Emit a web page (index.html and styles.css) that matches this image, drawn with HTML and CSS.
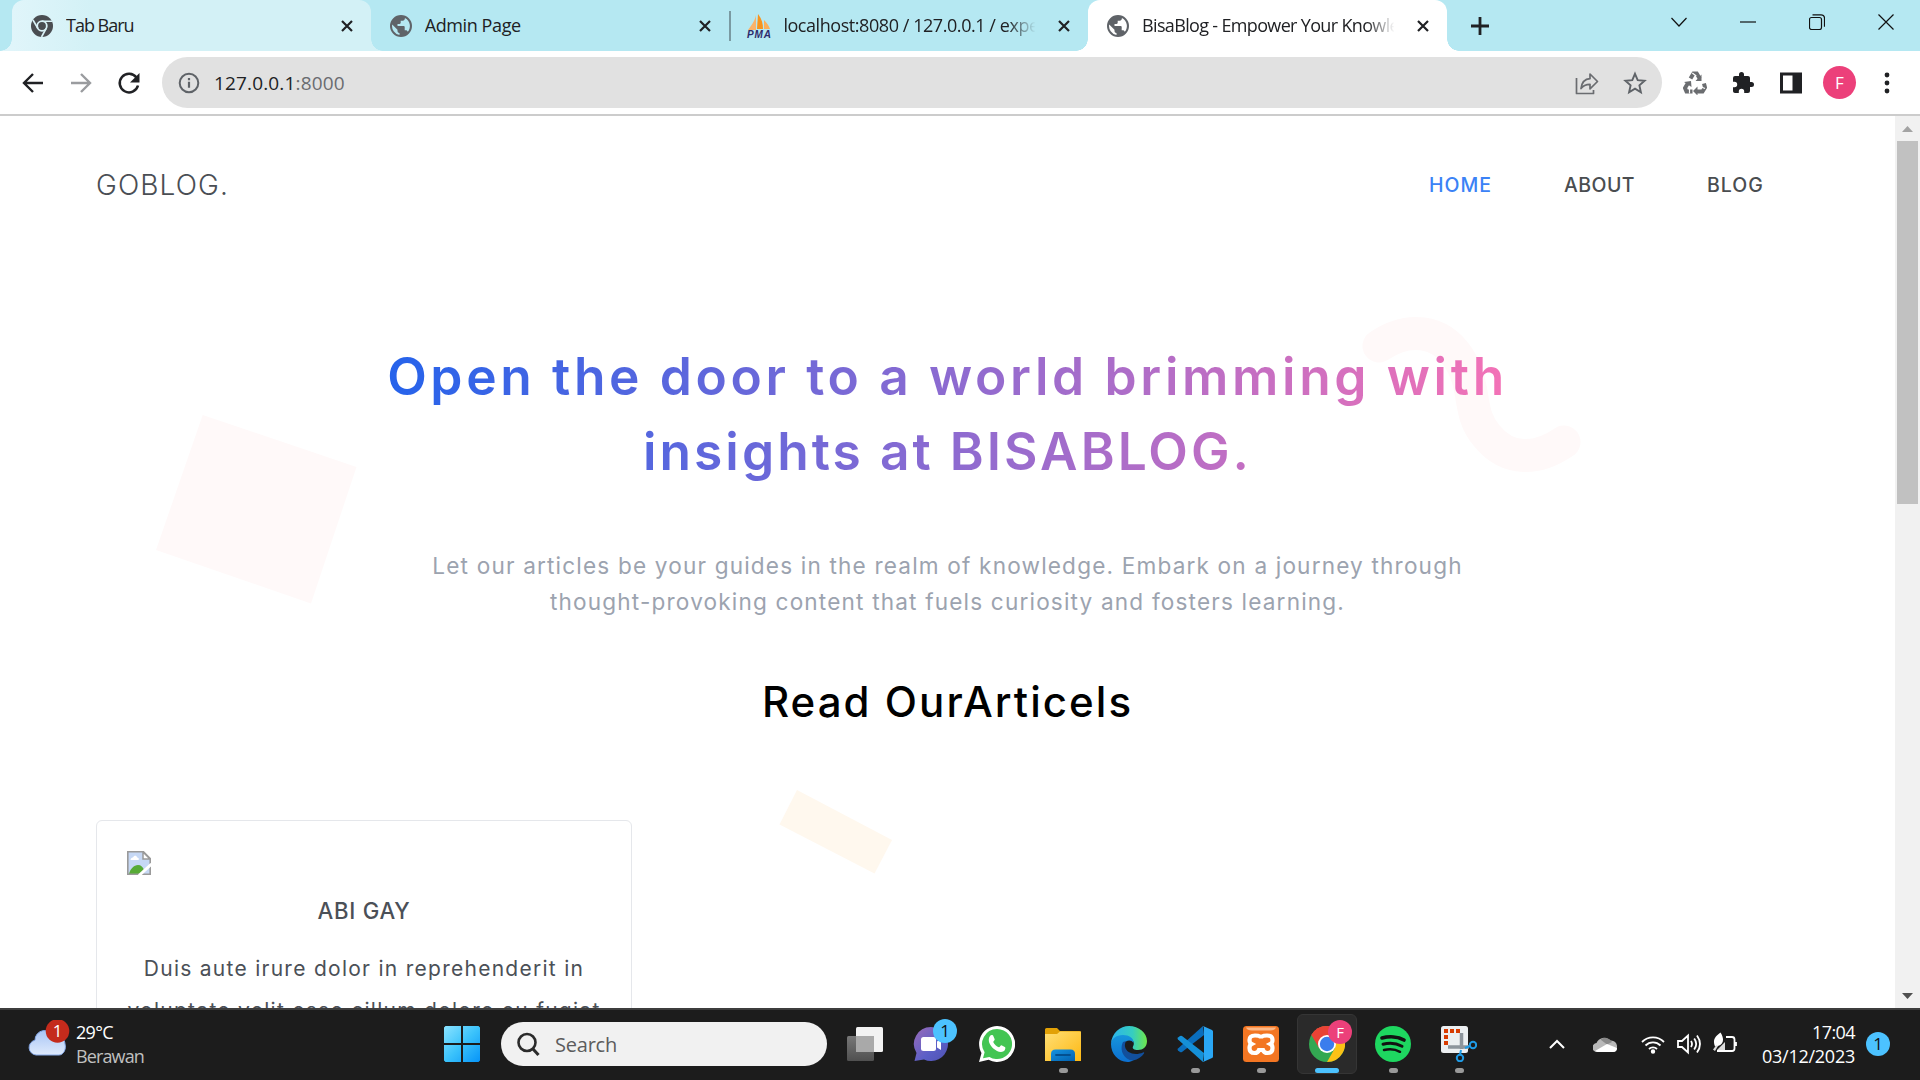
FILE: index.html
```html
<!DOCTYPE html>
<html lang="id">
<head>
<meta charset="utf-8">
<title>BisaBlog - Empower Your Knowledge</title>
<link rel="stylesheet" href="styles.css">
</head>
<body>
<svg class="defs" width="0" height="0">
  <symbol id="globe" viewBox="0 0 24 24"><path fill="#5f6368" fill-rule="evenodd" d="M12 1a11 11 0 1 0 0 22A11 11 0 0 0 12 1zM3.2 10.5l5.3 5.2v1.2c0 1.200.8 2 2 2v2A9 9 0 0 1 3.200 10.500zM18.800 17.800c-.3-.9-1.100-1.500-2.100-1.500h-1v-3.200c0-.6-.5-1.100-1.100-1.100H8.500V9.900h2.100c.6 0 1.100-.5 1.100-1.100V6.700h2.100c1.200 0 2.100-1 2.100-2.100V4a9 9 0 0 1 2.900 13.800z"/></symbol>
  <symbol id="x" viewBox="0 0 12 12"><path d="M1 1l10 10M11 1L1 11" stroke="#202124" stroke-width="2.200" fill="none"/></symbol>
</svg>
<div class="tabs">
  <div class="tab tab-hover">
    <svg class="fav" viewBox="0 0 24 24"><circle cx="12" cy="12" r="11" fill="#4a4d51"/><circle cx="12" cy="12" r="4.800" fill="#4a4d51" stroke="#d9f2f7" stroke-width="1.800"/><path d="M12 7.200h10M7.900 14.500L3 6M16.100 14.500L11.500 23" stroke="#d9f2f7" stroke-width="1.600"/></svg>
    <span class="tab-title title-new">Tab Baru</span><svg class="close"><use href="#x"/></svg>
  </div>
  <div class="tab">
    <svg class="fav"><use href="#globe"/></svg>
    <span class="tab-title title-admin">Admin Page</span><svg class="close"><use href="#x"/></svg>
  </div>
  <div class="tab tab-sep">
    <svg class="fav" viewBox="0 0 24 24"><path d="M9 1v15H1C4 12 8 7 9 1z" fill="#f9b36b"/><path d="M11 0c4 5 5 10 5 15h-6z" fill="#f7941d"/><path d="M17 6c3 3 5 6 6 9h-6z" fill="#fbb05b"/><text x="0" y="24" class="pma" textLength="24">PMA</text></svg>
    <span class="tab-title faded title-pma">localhost:8080 / 127.0.0.1 / experi</span><svg class="close"><use href="#x"/></svg>
  </div>
  <div class="tab tab-active">
    <svg class="fav"><use href="#globe"/></svg>
    <span class="tab-title faded title-blog">BisaBlog - Empower Your Knowle</span><svg class="close"><use href="#x"/></svg>
  </div>
  <svg class="plus" viewBox="0 0 18 18"><path d="M9 0v18M0 9h18" stroke="#202124" stroke-width="2.800"/></svg>
  <div class="win">
    <svg viewBox="0 0 16 16"><path d="M.5 4l7.500 8 7.500-8"/></svg>
    <svg viewBox="0 0 16 16"><path d="M0 8h16"/></svg>
    <svg viewBox="0 0 16 16"><rect x=".5" y="3.500" width="12" height="12" rx="2"/><path d="M3.500.8h8.500c2 0 3.500 1.500 3.500 3.500v8.500"/></svg>
    <svg viewBox="0 0 16 16"><path d="M.5.5l15 15M15.500.5l-15 15"/></svg>
  </div>
</div>
<div class="toolbar">
  <svg class="tool" viewBox="0 0 24 24"><path d="M22 12H3M12 3l-9 9 9 9" fill="none" stroke="#202124" stroke-width="2.400"/></svg>
  <svg class="tool" viewBox="0 0 24 24"><path d="M2 12h19M12 3l9 9-9 9" fill="none" stroke="#9a9c9f" stroke-width="2.400"/></svg>
  <svg class="tool" viewBox="0 0 24 24"><path d="M19.500 6.500A9.300 9.300 0 1 0 21 14.500" fill="none" stroke="#202124" stroke-width="2.500"/><path d="M22.500 2v9.500H13z" fill="#202124"/></svg>
  <div class="omnibox">
    <svg class="info" viewBox="0 0 22 22"><circle cx="11" cy="11" r="9.300" fill="none" stroke="#5f6368" stroke-width="2"/><path d="M11 9.800v6M11 6v2.200" stroke="#5f6368" stroke-width="2.200"/></svg>
    <span class="url">127.0.0.1<span class="port">:8000</span></span>
    <svg class="obi" viewBox="0 0 24 24"><path d="M1.500 7v15.500h17V19M6 17.500c.8-6 4-9.500 9-9.800V3l7.500 7.500L15 17.800v-4.500c-4 0-7 1.200-9 4.200z" fill="none" stroke="#6a6c70" stroke-width="1.700" stroke-linejoin="round"/></svg>
    <svg class="obi" viewBox="0 0 24 24"><path d="M12 2.800l2.700 6.400 6.900.6-5.200 4.600 1.500 6.800-5.900-3.600-5.900 3.600 1.500-6.800L2.400 9.800l6.900-.6z" fill="none" stroke="#5f6368" stroke-width="1.900"/></svg>
  </div>
  <svg class="tool" viewBox="0 0 24 24"><g fill="none" stroke="#6b6d70" stroke-width="4"><path d="M7.500 7.500l3-5h3.200l3 5M21 12.500l1 4-2.500 4h-6M9.500 20.500h-6L2 17l3-5"/></g><path d="M18.500 3.500v6.500h-6zM14.500 15.500v9l-4.500-4.500zM1 11l7-1 .5 6z" fill="#6b6d70"/><path d="M9.300 2l4 3M22 17.500l-5-2M6.500 22.500V17" stroke="#fff" stroke-width="1.200"/></svg>
  <svg class="tool" viewBox="0 0 24 24"><path d="M20.500 11H19V7c0-1.100-.9-2-2-2h-4V3.500a2.500 2.500 0 0 0-5 0V5H4a2 2 0 0 0-2 2v3.800h1.500a2.700 2.700 0 0 1 0 5.400H2V20c0 1.100.9 2 2 2h3.800v-1.500a2.700 2.700 0 0 1 5.400 0V22H17a2 2 0 0 0 2-2v-4h1.500a2.500 2.500 0 0 0 0-5z" fill="#202124"/></svg>
  <svg class="tool" viewBox="0 0 24 24"><path fill-rule="evenodd" d="M1 1.500h22v21H1zM4 4.500v15h9.500v-15z" fill="#202124"/></svg>
  <div class="avatar">F</div>
  <svg class="tool" viewBox="0 0 24 24"><g fill="#202124"><circle cx="12" cy="4" r="2.400"/><circle cx="12" cy="12" r="2.400"/><circle cx="12" cy="20" r="2.400"/></g></svg>
</div>
<div class="view">
  <main class="page">
    <svg class="shapes" viewBox="0 116 1895 892">
      <path d="M202.700 415L356.500 467 311 603.500 156 550z" fill="#fff9f9"/>
      <path d="M797 790l95 50-17.500 33.500-95-49z" fill="#fff8ee"/>
      <path d="M1379 346C1408 326 1440 330 1458 357C1478 387 1466 412 1487 436C1508 462 1538 460 1564 442" fill="none" stroke="#fff9f9" stroke-width="33" stroke-linecap="round"/>
    </svg>
    <header class="header">
      <div class="logo">GOBLOG.</div>
      <nav class="nav"><a class="current">HOME</a><a class="about">ABOUT</a><a class="blog">BLOG</a></nav>
    </header>
    <h1 class="hero">Open the door to a world brimming with<br><span class="hero-end">insights at BISABLOG.</span></h1>
    <p class="lead">Let our articles be your guides in the realm of knowledge. Embark on a journey through<br>thought-provoking content that fuels curiosity and fosters learning.</p>
    <h2 class="section">Read OurArticels</h2>
    <article class="card">
      <svg class="broken" viewBox="0 0 24 24"><path d="M.8.8h15.700l6.700 6.700v15.700H.8z" fill="#c6d8f5"/><path d="M2 23c1-5 5-9 9-9 3 0 5 2 6 5l-4 4z" fill="#57ab36"/><path d="M3.500 9c0-2 2-2.500 2.500-2.500C7 4 10 4.500 10 6.500c2 0 2.500 2.500 1 2.500z" fill="#fff"/><path d="M.8.8h15.700l6.700 6.700v15.700H.8z" fill="none" stroke="#9a9a9a" stroke-width="1.600"/><path d="M16 1v7h7z" fill="#fff" stroke="#9a9a9a" stroke-width="1.500"/><path d="M24.500 13L12 24.500" stroke="#fff" stroke-width="3"/></svg>
      <h3 class="card-title">ABI GAY</h3>
      <p class="card-text">Duis aute irure dolor in reprehenderit in<br>voluptate velit esse cillum dolore eu fugiat</p>
    </article>
  </main>
  <div class="scrollbar"><svg viewBox="0 0 25 25"><path d="M7 16h11l-5.500-6z" fill="#a3a3a3"/></svg><div class="thumb"></div><svg viewBox="0 0 25 25"><path d="M7 10h11l-5.500 6z" fill="#505050"/></svg></div>
</div>
<div class="taskbar">
  <div class="weather">
    <svg viewBox="0 0 42 42"><defs><linearGradient id="cl" x1="0" y1="0" x2="0" y2="1"><stop offset="0" stop-color="#a9c6f5"/><stop offset="1" stop-color="#dfeafc"/></linearGradient></defs><circle cx="26" cy="19" r="9" fill="#f7941d"/><path d="M8 35a7.500 7.500 0 0 1-1-14.800A9.500 9.500 0 0 1 25.500 17 8 8 0 0 1 37 24c1.500 5-1.500 11-6 11z" fill="url(#cl)" stroke="#86a9e8"/><circle cx="29.500" cy="11" r="11.800" fill="#c42b1c"/><text x="29.500" y="17" text-anchor="middle" class="badge-w">1</text></svg>
    <div class="wtext"><div class="temp">29°C</div><div class="dim">Berawan</div></div>
  </div>
  <div class="start"><svg viewBox="0 0 36 36"><defs><linearGradient id="wn" x1="0" y1="0" x2="1" y2="1"><stop offset="0" stop-color="#8be3ff"/><stop offset=".5" stop-color="#3cc3fb"/><stop offset="1" stop-color="#0694f8"/></linearGradient></defs><path d="M1.500 0H17v17H0V1.500zM19 0h15.500L36 1.500V17H19zM0 19h17v17H1.500L0 34.500zM19 19h17v15.500L34.500 36H19z" fill="url(#wn)"/></svg></div>
  <div class="search"><svg viewBox="0 0 24 24"><circle cx="11" cy="10.500" r="8.500" fill="none" stroke="#2b2b2b" stroke-width="2.600"/><path d="M17 17l5.500 6" stroke="#2b2b2b" stroke-width="3"/></svg><span>Search</span></div>
  <div class="apps">
    <div class="app"><svg viewBox="0 0 36 36"><defs><linearGradient id="tv" x1="0" y1="0" x2="0" y2="1"><stop offset="0" stop-color="#777"/><stop offset="1" stop-color="#505050"/></linearGradient></defs><rect x="9" y="1" width="27" height="25" rx="1.500" fill="#f2f2f2"/><rect x="0" y="10" width="27" height="25" rx="1.500" fill="url(#tv)"/><path d="M9 10h18v16H9z" fill="#a9a9a9"/></svg></div>
    <div class="app"><svg viewBox="0 0 36 36"><defs><linearGradient id="ch" x1="0" y1="0" x2="1" y2="1"><stop offset="0" stop-color="#9a6bb8"/><stop offset=".6" stop-color="#5b5fc7"/><stop offset="1" stop-color="#4f52b2"/></linearGradient></defs><path d="M18 1a17 17 0 1 1-7 32.500L1.500 35l2-8A17 17 0 0 1 18 1z" fill="url(#ch)"/><rect x="8" y="11" width="15" height="14" rx="2.500" fill="#fff"/><path d="M24 15.500l4-2.500v11l-4-2.500z" fill="#fff"/></svg><span class="badge">1</span></div>
    <div class="app"><svg viewBox="0 0 36 36"><path d="M18 0a18 18 0 1 1-8.500 33.800L0 36l2.500-9A18 18 0 0 1 18 0z" fill="#fff"/><path d="M18 3a15 15 0 1 1-7.600 27.900L4 32.300l1.600-6A15 15 0 0 1 18 3z" fill="#43c553"/><path d="M11 10c1-1.500 3-1 3.300 0l1.400 3.300c.2.700-1.500 2.400-1.500 2.700 1.200 2.500 3.300 4.300 5.700 5.300.8.200 1.800-2.300 2.600-2l3.300 1.600c1.200.6.200 3.500-1.200 4.300-3 1.800-7.100 0-10.300-2.700C11 19.500 8 14 11 10z" fill="#fff"/></svg></div>
    <div class="app"><svg viewBox="0 0 36 36"><defs><linearGradient id="fo" x1="0" y1="0" x2="1" y2="1"><stop offset="0" stop-color="#ffdf75"/><stop offset="1" stop-color="#fdb813"/></linearGradient><linearGradient id="fb" x1="0" y1="0" x2="1" y2="1"><stop offset="0" stop-color="#1593e0"/><stop offset="1" stop-color="#0261b0"/></linearGradient></defs><path d="M0 3.500Q0 2 1.500 2H12l3 3h19.500Q36 5 36 6.500V20H0z" fill="#e2a106"/><path d="M0 8h12l3-2.500h21V35H0z" fill="url(#fo)"/><path d="M6 35v-7q0-4.500 4.500-4.500h15Q30 23.500 30 28v7z" fill="url(#fb)"/><path d="M11 29h14" stroke="#034f8f" stroke-width="1.800" stroke-linecap="round"/></svg><i class="dot"></i></div>
    <div class="app"><svg viewBox="0 0 36 36"><defs><linearGradient id="e1"><stop offset="0" stop-color="#2bb3ee"/><stop offset=".6" stop-color="#36cdc0"/><stop offset="1" stop-color="#6ee84b"/></linearGradient><linearGradient id="e2" x1="0" y1="0" x2="0" y2="1"><stop offset="0" stop-color="#1695dc"/><stop offset="1" stop-color="#0c6fd0"/></linearGradient></defs><path d="M0 17C1 7 9 0 18 0c10 0 18 7 18 15 0 6-4 9-9 9-4 0-6-1.500-5-3.500 3-5-2-10-9-10C7 10.500 2 13 0 17z" fill="url(#e1)"/><path d="M0 18c0-5 5-9 12-9 6 0 11 3 10.500 8-2-4-8-3-10 1-3 7 2 14 10 16-2 1.500-4 2-6 2C7 35.500 0 28 0 18z" fill="url(#e2)"/><path d="M12 16c-4 8 1 18 10 18.500 5-1 9-4 11-7 .5-1-.3-1.400-1-1-8 3.500-17 .5-18-6-.3-2 .3-4 1-5.500z" fill="#124f9c"/></svg></div>
    <div class="app"><svg viewBox="0 0 36 36"><path d="M26 0L1 22.500q-1 1 0 2L3 26q1 .6 2 0L27 9z" fill="#0a6ebd"/><path d="M26 36L1 13.500q-1-1 0-2L3 10q1-.6 2 0l22 17z" fill="#1590d8"/><path d="M26 0l9 4q1 .5 1 1.500v25q0 1-1 1.500l-9 4q-.5 0 1-1.500V1.500z" fill="#2aa7f5"/></svg><i class="dot"></i></div>
    <div class="app"><svg viewBox="0 0 36 36"><rect width="36" height="36" rx="3.500" fill="#f37623"/><path d="M3 1.500h30q-1 3-6 3H9q-5 0-6-3z" fill="#fbb98a"/><path d="M12 9.500q6 0 6 3 0-3 6-3 5.500 0 5.500 4.500 0 3-2 4 2 1 2 4 0 5-5 5-3.500 0-4.500-3h-4q-1 3-4.500 3-5 0-5-5 0-3 2-4-2-1-2-4 0-4.500 5.500-4.500z" fill="none" stroke="#fff" stroke-width="4.200"/></svg><i class="dot"></i></div>
    <div class="app focus"><svg viewBox="0 0 36 36"><circle cx="18" cy="18" r="18" fill="#33a852"/><path d="M18 18L2.400 9A18 18 0 0 1 33.600 9L18 9.500z" fill="#e94335"/><path d="M18 9h15.600A18 18 0 0 1 18 36l8-14z" fill="#fbc116"/><path d="M2.400 9A18 18 0 0 1 18 0v18l-8 4z" fill="#e94335"/><circle cx="18" cy="18" r="9" fill="#fff"/><circle cx="18" cy="18" r="7.200" fill="#3b7ded"/></svg><span class="badge pink">F</span><i class="dot"></i></div>
    <div class="app"><svg viewBox="0 0 36 36"><circle cx="18" cy="18" r="18" fill="#1ed760"/><g fill="none" stroke="#121212" stroke-linecap="round"><path d="M7 12c7-2 16-1.500 22 2" stroke-width="3.600"/><path d="M8 18.200c6.500-1.800 13.500-1 19 2" stroke-width="3"/><path d="M9 24c5.500-1.300 11-1 16 1.800" stroke-width="2.500"/></g></svg><i class="dot"></i></div>
    <div class="app"><svg viewBox="0 0 36 36"><rect width="27" height="27" rx="2.500" fill="#eceff1"/><path d="M3 5h4M9 5h4M15 5h4M5 9v4M5 15v4" stroke="#d83b01" stroke-width="4"/><path d="M20.500 7v16M7 21h21" stroke="#8d959c" stroke-width="3.500"/><circle cx="32" cy="19" r="3.200" fill="none" stroke="#1f9be6" stroke-width="2"/><circle cx="19" cy="32" r="3.200" fill="none" stroke="#1f9be6" stroke-width="2"/><path d="M24 22l5-2M20 24l-1 5" stroke="#1f9be6" stroke-width="2"/></svg><i class="dot"></i></div>
  </div>
  <div class="tray">
    <svg class="chev" viewBox="0 0 16 10"><path d="M1 9l7-7 7 7"/></svg>
    <svg class="cloud" viewBox="0 0 24 16"><path d="M4.500 16A4.500 4.500 0 0 1 3.500 7 8 8 0 0 1 17 4.500 6 6 0 0 1 24 11q0 5-4 5z" fill="#b9b9b9"/><path d="M7.500 3.500A7.500 7.500 0 0 1 19 6l-5 2.500z" fill="#8a8a8a"/><path d="M2 15l12-7 10 4q0 4-4 4H4.500z" fill="#fff"/></svg>
    <svg class="ti" viewBox="0 0 24 24"><path d="M1 10a15.500 15.500 0 0 1 22 0M4.500 13.500a10.600 10.600 0 0 1 15 0M8 17a5.700 5.700 0 0 1 8 0"/><circle cx="12" cy="19.500" r="1.300" fill="#fff"/></svg>
    <svg class="ti" viewBox="0 0 24 24"><path d="M1 9h4l6-5.500v17L5 15H1zM14 9q2 3 0 6M17.200 6.500q4 5.500 0 11M20 3.500q6 8.500 0 17"/></svg>
    <svg class="ti" viewBox="0 0 24 24"><path d="M13 5h6q2.500 0 2.500 2.500v9Q21.500 19 19 19H4M23 10v4"/><path d="M2 14.500C-1 7 3 4 7.500.5 11 6 11.500 12 5 14z" fill="#fff" stroke="none"/><path d="M4 18l8-8v8zM0 17.500L3.500 13l1.500 1-3 5z" fill="#ddd" stroke="none"/></svg>
    <div class="clock"><div class="time">17:04</div><div class="date">03/12/2023</div></div>
    <span class="notif">1</span>
  </div>
</div>
</body>
</html>
```
FILE: styles.css
```css
* { box-sizing: border-box; }
body { margin: 0; width: 1920px; height: 1080px; overflow: hidden; display: flex; flex-direction: column; background: #fff; font-family: "Open Sans", "Noto Sans", sans-serif; font-size: 18px; color: #202124; }
svg { display: block; flex: none; }
h1, h2, h3, p { margin: 0; white-space: nowrap; }
.defs { position: absolute; }

/* Tab strip */
.tabs { height: 51px; flex: none; display: flex; align-items: center; padding-left: 12px; background: #b5e8f2; }
.tab { width: 358.700px; height: 51px; flex: none; display: flex; align-items: center; padding: 0 18px; position: relative; }
.fav { width: 24px; height: 24px; margin-right: 12px; overflow: visible; }
.tab-title { width: 258px; height: 30px; line-height: 29px; overflow: hidden; white-space: nowrap; }
.title-new { letter-spacing: -1px; }
.title-admin { letter-spacing: -.4px; }
.title-pma { letter-spacing: -.44px; }
.title-blog { letter-spacing: -.66px; }
.faded { -webkit-mask-image: linear-gradient(90deg, #000 88%, transparent 99%); mask-image: linear-gradient(90deg, #000 88%, transparent 99%); }
.close { width: 12px; height: 12px; margin-left: 20px; }
.tab-hover { background: linear-gradient(90deg, #e0f5fa, #d3f1f6 80px); border-radius: 12px 12px 0 0; }
.tab-active { background: #fff; border-radius: 12px 12px 0 0; }
.tab-hover::before, .tab-hover::after, .tab-active::before, .tab-active::after { content: ""; position: absolute; bottom: 0; width: 12px; height: 12px; }
.tab-hover::before { left: -12px; background: radial-gradient(circle at 0 0, transparent 11.500px, #e0f5fa 12px); }
.tab-hover::after { right: -12px; background: radial-gradient(circle at 100% 0, transparent 11.500px, #d3f1f6 12px); }
.tab-active::before { left: -12px; background: radial-gradient(circle at 0 0, transparent 11.500px, #fff 12px); }
.tab-active::after { right: -12px; background: radial-gradient(circle at 100% 0, transparent 11.500px, #fff 12px); }
.tab-sep::before { content: ""; position: absolute; left: 0; top: 11px; width: 1.500px; height: 30px; background: #7a9aa2; }
.pma { font: italic bold 10px "Liberation Sans", sans-serif; fill: #2d2a6b; }
.plus { width: 18px; height: 18px; margin-left: 24px; }
.win { margin-left: auto; display: flex; gap: 53px; padding: 0 26px 7px 0; }
.win svg { width: 16px; height: 16px; fill: none; stroke: #111; stroke-width: 1.200; }

/* Address bar */
.toolbar { height: 65px; flex: none; display: flex; align-items: center; padding: 0 21px; border-bottom: 2px solid #ccc; }
.tool { width: 24px; height: 24px; margin-right: 24px; }
.omnibox { width: 1501px; height: 51px; margin: 0 21px 0 -3px; padding: 0 15px 0 16px; border-radius: 26px; background: #e1e1e1; display: flex; align-items: center; }
.info { width: 22px; height: 22px; margin-right: 14px; }
.url { flex: 1; line-height: 30px; font-size: 19px; letter-spacing: .15px; }
.port { color: #6a6c70; }
.obi { width: 24px; height: 24px; margin-left: 24px; }
.avatar { width: 33px; height: 33px; margin: 0 19px 0 -4px; border-radius: 50%; background: #ec407a; color: #fff; text-align: center; line-height: 33px; font-size: 17px; }
.toolbar > :last-child { margin-right: 0; }

/* Blog page */
.view { height: 892px; flex: none; display: flex; overflow: hidden; }
.page { width: 1895px; padding: 0 96px; position: relative; font-family: Inter, "Liberation Sans", sans-serif; }
.page > * { position: relative; }
.page > .shapes { position: absolute; left: 0; top: 0; width: 1895px; height: 892px; }
.header { height: 138px; display: flex; align-items: center; justify-content: space-between; }
.logo { font-size: 28px; font-weight: 350; letter-spacing: 1.100px; color: #4a4e54; }
.nav { display: flex; gap: 72px; padding-right: 35px; font-size: 19.500px; font-weight: 500; color: #4a4d50; }
.current { color: #3b82f6; letter-spacing: 1px; }
.about { letter-spacing: .45px; }
.blog { letter-spacing: 1.050px; }
.hero { width: 1124px; margin: 85px auto 0; text-align: center; font-size: 51.500px; font-weight: 600; line-height: 75px; letter-spacing: 3.640px; color: transparent; background: linear-gradient(90deg, #2563eb, #f472b6); -webkit-background-clip: text; background-clip: text; }
.hero-end { letter-spacing: 3.050px; }
.lead { margin-top: 59px; text-align: center; font-size: 22.600px; font-weight: 400; line-height: 36px; letter-spacing: 1.170px; color: #9ca3af; }
.section { margin-top: 52px; text-align: center; font-size: 42px; font-weight: 500; line-height: 60px; letter-spacing: 2.040px; color: #000; }
.card { width: 536px; height: 400px; margin-top: 88px; padding: 30px; border: 1px solid #e5e7eb; border-radius: 6px; color: #4b5057; text-align: center; }
.broken { width: 24px; height: 24px; }
.card-title { margin-top: 18px; font-size: 22.200px; font-weight: 500; line-height: 36px; letter-spacing: .75px; }
.card-text { margin: 19px -10px 0; font-size: 21px; line-height: 42px; letter-spacing: 1.270px; }

.scrollbar { width: 25px; display: flex; flex-direction: column; background: #f1f1f1; }
.scrollbar svg { width: 25px; height: 25px; }
.thumb { width: 21px; height: 363px; margin: 0 2px auto; background: #c1c1c1; }

/* Taskbar */
.taskbar { height: 72px; flex: none; display: flex; align-items: center; padding-bottom: 2px; border-top: 2px solid #3d3d3d; background: #1c1c1c; color: #fff; }
.weather { display: flex; width: 444px; padding-left: 28px; }
.weather svg { width: 42px; height: 42px; margin: 0 6px 0 0; }
.wtext, .clock { line-height: 24px; }
.temp { letter-spacing: -.7px; }
.dim { color: #c0c0c0; letter-spacing: -.87px; }
.badge-w { font: 17px "Open Sans", sans-serif; fill: #fff; }
.start svg { width: 36px; height: 36px; }
.search { width: 326px; height: 44px; margin-left: 21px; border-radius: 22px; background: #f1f1f1; color: #5c5c5c; display: flex; align-items: center; padding-left: 15px; font-size: 20px; letter-spacing: -.22px; }
.search svg { width: 24px; height: 24px; margin-right: 15px; }
.apps { display: flex; margin-left: 8px; gap: 6px; }
.app { width: 60px; height: 60px; padding: 12px; border-radius: 6px; position: relative; }
.app svg { width: 36px; height: 36px; }
.focus { background: #2a2a2a; border: 1px solid #353535; padding: 11px; }
.dot { position: absolute; left: 25.500px; bottom: 1px; width: 9px; height: 5px; border-radius: 3px; background: #999; }
.focus .dot { left: 17px; bottom: 0; width: 24px; background: #4cc2ff; }
.badge, .notif { width: 24px; height: 24px; border-radius: 50%; text-align: center; line-height: 24px; font-size: 17px; background: #4cc2ff; color: #111; }
.badge { position: absolute; right: 4px; top: 5px; }
.pink { background: #ec407a; color: #fff; font-size: 15px; }
.tray { margin-left: auto; display: flex; align-items: center; padding-right: 30px; }
.chev { width: 16px; height: 10px; margin-right: 28px; fill: none; stroke: #fff; stroke-width: 2; }
.cloud { width: 24px; height: 16px; margin-right: 24px; }
.ti { width: 24px; height: 24px; margin-right: 12px; fill: none; stroke: #fff; stroke-width: 1.800; }
.clock { text-align: right; width: 106px; margin-right: 11px; }
.time { letter-spacing: -.58px; }
.date { letter-spacing: -.25px; }
```
